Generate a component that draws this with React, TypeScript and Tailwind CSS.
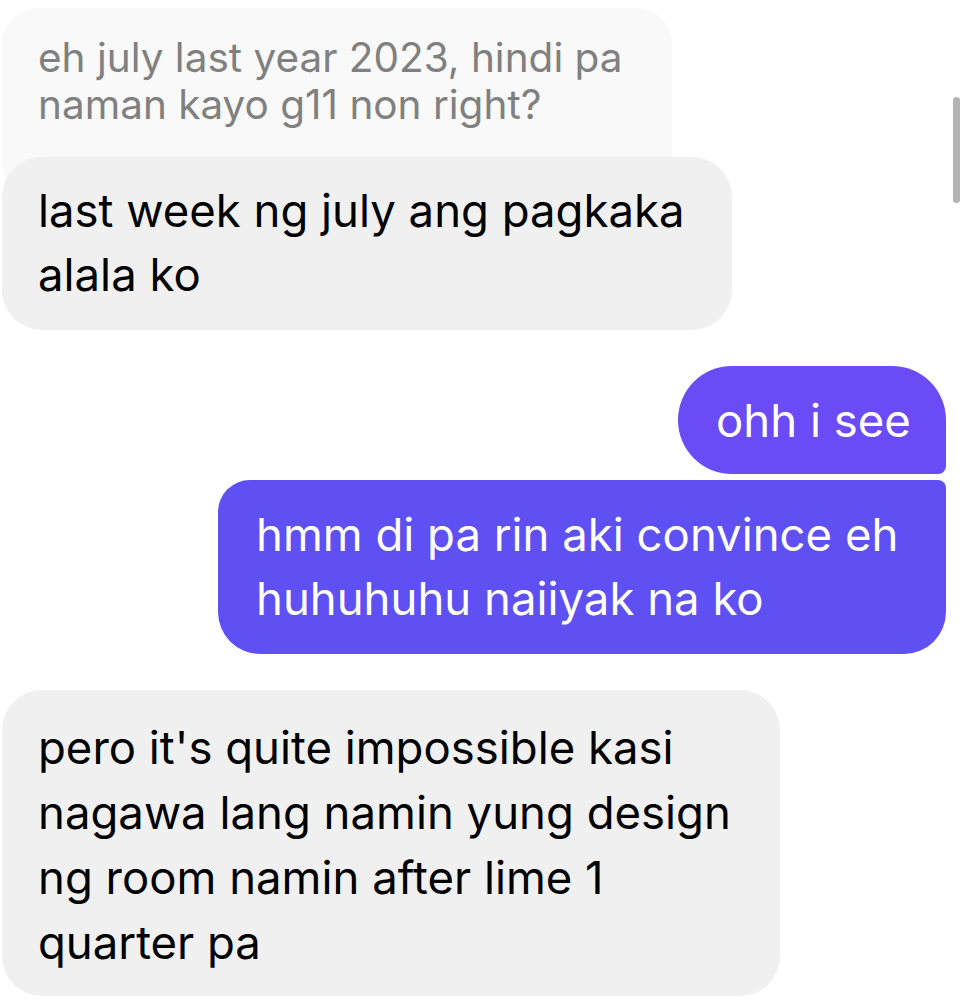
const font = { fontFamily: 'Inter, "Noto Sans", sans-serif' };

function Lines({ lines }: { lines: string[] }) {
  return (
    <>
      {lines.map((l) => (
        <div key={l} className="whitespace-nowrap">
          {l}
        </div>
      ))}
    </>
  );
}

export default function App() {
  return (
    <div className="relative w-[970px] h-[1002px] bg-white overflow-hidden" style={font}>
      <div className="flex flex-col pt-[8px]">
        <div className="ml-[2px] w-[670px] h-[190px] rounded-[36px] bg-[#f9f9f9] pl-[36px] pt-[26px] text-[40.5px] leading-[47px] text-[#808080]">
          <Lines lines={['eh july last year 2023, hindi pa', 'naman kayo g11 non right?']} />
        </div>
        <div className="relative -mt-[41px] ml-[2px] w-[730px] h-[173px] rounded-[40px] bg-[#f0f0f0] pl-[36px] pt-[22px] text-[45.5px] leading-[64px] text-black">
          <Lines lines={['last week ng july ang pagkaka', 'alala ko']} />
        </div>

        <div className="flex flex-col items-end gap-[6px] mt-[36px] mr-[24px] text-white text-[45.5px] leading-[64px]">
          <div className="w-[268px] h-[108px] rounded-[54px] rounded-br-[8px] bg-[#6a4bf5] pl-[38px] pt-[23px]">
            <Lines lines={['ohh i see']} />
          </div>
          <div className="w-[728px] h-[174px] rounded-[32px] rounded-tr-[8px] rounded-br-[42px] rounded-bl-[42px] bg-[#5e50f2] pl-[38px] pt-[23px]">
            <Lines lines={['hmm di pa rin aki convince eh', 'huhuhuhu naiiyak na ko']} />
          </div>
        </div>

        <div className="mt-[36px] ml-[2px] w-[778px] h-[306px] rounded-[40px] bg-[#f0f0f0] pl-[36px] pt-[25px] text-[45.5px] leading-[65px] text-black">
          <Lines
            lines={[
              "pero it's quite impossible kasi",
              'nagawa lang namin yung design',
              'ng room namin after lime 1',
              'quarter pa',
            ]}
          />
        </div>
      </div>

      <div className="absolute left-[953px] top-[97px] w-[7px] h-[106px] rounded-full bg-[#b4b4b4]" />
    </div>
  );
}
